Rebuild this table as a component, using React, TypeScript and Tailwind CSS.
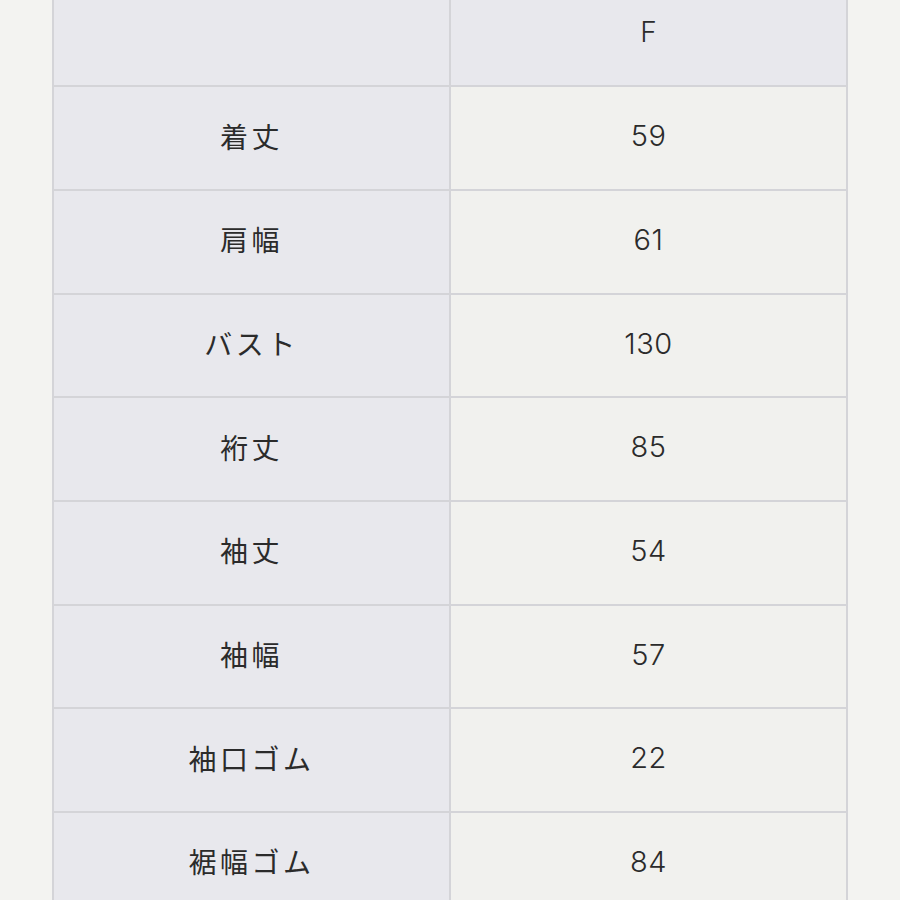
const rows: [string, string][] = [
  ["着丈", "59"],
  ["肩幅", "61"],
  ["バスト", "130"],
  ["裄丈", "85"],
  ["袖丈", "54"],
  ["袖幅", "57"],
  ["袖口ゴム", "22"],
  ["裾幅ゴム", "84"],
];

export default function App() {
  return (
    <div className="h-[900px] w-[900px] overflow-hidden bg-[#f3f3f1] font-['Noto_Sans_CJK_JP',sans-serif] text-[#2b2b2b]">
      <div className="ml-[52px] mt-[-18.5px] grid w-[796px] grid-cols-2 gap-[2px] border-2 border-[#d4d4d8] bg-[#d4d4d8]">
        <div className="flex h-[101.7px] items-center justify-center bg-[#e8e8ed]" />
        <div className="flex h-[101.7px] items-center justify-center bg-[#e8e8ed] pb-[4px] font-['Inter',sans-serif] text-[28px] font-light">
          F
        </div>
        {rows.map(([label, value]) => (
          <div key={label} className="contents">
            <div className="flex h-[101.7px] items-center justify-center bg-[#e8e8ed] pb-[5px] text-[28px] tracking-[3.5px]">
              {label}
            </div>
            <div className="flex h-[101.7px] items-center justify-center bg-[#f1f1ee] pb-[4px] font-['Inter',sans-serif] text-[29px] font-light tracking-[0.5px]">
              {value}
            </div>
          </div>
        ))}
      </div>
    </div>
  );
}
